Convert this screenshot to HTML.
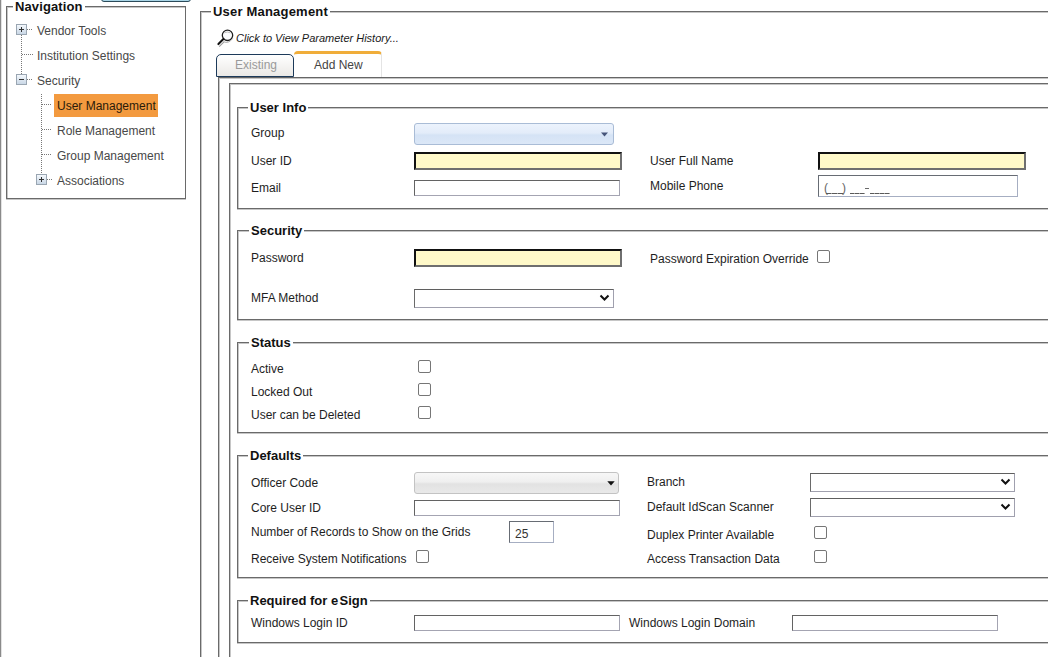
<!DOCTYPE html>
<html><head><meta charset="utf-8"><title>User Management</title>
<style>
*{box-sizing:border-box;}
html,body{margin:0;padding:0;}
body{width:1048px;height:657px;overflow:hidden;position:relative;background:#fff;font-family:"Liberation Sans",sans-serif;}
.a{position:absolute;}
.t{position:absolute;font-size:12px;line-height:14px;color:#1e1e1e;white-space:nowrap;}
.tr{position:absolute;font-size:12px;line-height:14px;color:#484848;white-space:nowrap;}
.lg{position:absolute;font-size:13px;font-weight:bold;line-height:15px;color:#111;background:#fff;padding:0 2px;white-space:nowrap;}
.fs{position:absolute;border:1px solid #6a6a6a;box-shadow:inset 1px 1px 0 #c6c6c6,0 1px 0 #c6c6c6;}
.cb{position:absolute;width:13px;height:13px;border:1px solid #767676;border-radius:2px;background:#fff;}
.yl{position:absolute;height:18px;width:208px;background:#fff9c9;border-style:solid;border-width:2px;border-color:#111 #6f6f6f #6f6f6f #111;}
.tb{position:absolute;height:16px;width:206px;background:#fff;border-style:solid;border-width:1px;border-color:#636363 #a4a4b2 #a4a4b2 #636363;}
.sel{position:absolute;height:19px;background:#fff;border-style:solid;border-width:1px;border-color:#5f5f5f #a0a0ae #a0a0ae #6a6a6a;}
.chev{position:absolute;width:11px;height:7px;}
.dv{position:absolute;width:1px;background-image:linear-gradient(#777 50%,transparent 50%);background-size:1px 2px;}
.dh{position:absolute;height:1px;background-image:linear-gradient(90deg,#777 50%,transparent 50%);background-size:2px 1px;}
.pm{position:absolute;width:11px;height:11px;border:1px solid #9aa6b2;background:linear-gradient(#f4f8fc,#c9d7e6);}
</style></head>
<body>
<!-- far-left frame line -->
<div class="a" style="left:0;top:0;width:1px;height:657px;background:#8a8a8a;box-shadow:1px 0 0 #e2e2e2"></div>
<!-- top button stub -->
<div class="a" style="left:101px;top:-6px;width:90px;height:8px;background:#a9d5e6;border:1px solid #2c4b5a;border-radius:0 0 3px 3px"></div>

<!-- NAVIGATION -->
<div class="fs" style="left:6px;top:6px;width:180px;height:193px"></div>
<div class="lg" style="left:13px;top:-1px;letter-spacing:0.12px;padding-right:2px">Navigation</div>

<!-- tree lines -->
<div class="dv" style="left:21px;top:35px;height:39px"></div>
<div class="dh" style="left:27px;top:29px;width:6px"></div>
<div class="dh" style="left:22px;top:54px;width:11px"></div>
<div class="dh" style="left:27px;top:79px;width:6px"></div>
<div class="dv" style="left:41px;top:94px;height:80px"></div>
<div class="dh" style="left:42px;top:104px;width:10px"></div>
<div class="dh" style="left:42px;top:129px;width:10px"></div>
<div class="dh" style="left:42px;top:154px;width:10px"></div>
<div class="dh" style="left:47px;top:179px;width:6px"></div>
<div class="pm" style="left:16px;top:24px"><div class="a" style="left:2px;top:4px;width:5px;height:1px;background:#333"></div><div class="a" style="left:4px;top:2px;width:1px;height:5px;background:#333"></div></div>
<div class="pm" style="left:16px;top:74px"><div class="a" style="left:2px;top:4px;width:5px;height:1px;background:#333"></div></div>
<div class="pm" style="left:36px;top:174px"><div class="a" style="left:2px;top:4px;width:5px;height:1px;background:#333"></div><div class="a" style="left:4px;top:2px;width:1px;height:5px;background:#333"></div></div>

<div class="tr" style="left:37px;top:24px">Vendor Tools</div>
<div class="tr" style="left:37px;top:49px">Institution Settings</div>
<div class="tr" style="left:37px;top:74px">Security</div>
<div class="a" style="left:54px;top:94px;width:104px;height:23px;background:#f39a3f"></div>
<div class="tr" style="left:57px;top:99px;color:#2a1a0a">User Management</div>
<div class="tr" style="left:57px;top:124px">Role Management</div>
<div class="tr" style="left:57px;top:149px">Group Management</div>
<div class="tr" style="left:57px;top:174px">Associations</div>

<!-- MAIN FIELDSET -->
<div class="fs" style="left:200px;top:11px;width:900px;height:700px"></div>
<div class="lg" style="left:211px;top:4px;letter-spacing:0.2px;padding-right:2px">User Management</div>

<!-- history link -->
<svg class="a" style="left:216px;top:29px" width="20" height="20" viewBox="0 0 20 20">
  <circle cx="11.5" cy="6.3" r="5.2" fill="#fbfcfd" stroke="#1e1e1e" stroke-width="1.3"/>
  <path d="M8.3 3.8 Q11.3 2.2 14.3 3.8" fill="none" stroke="#b8b8b8" stroke-width="0.9"/>
  <path d="M7.6 12.6 Q12.2 15.2 16.8 9.4" fill="none" stroke="#a8a8a8" stroke-width="1"/>
  <path d="M7.4 10.1 L2.4 15.1" stroke="#111" stroke-width="2.1" stroke-linecap="round"/>
  <path d="M8.0 12.9 L3.2 17.6" stroke="#9a9a9a" stroke-width="1.1"/>
</svg>
<div class="a" style="left:236px;top:32px;font-size:11px;line-height:13px;font-style:italic;color:#1a1a1a;white-space:nowrap">Click to View Parameter History...</div>

<!-- tabs -->
<div class="a" style="left:216px;top:54px;width:78px;height:23px;border:1px solid #1d3a5a;border-radius:5px 5px 0 0;background:linear-gradient(#ffffff,#ebe9e6)"></div>
<div class="a" style="left:235px;top:58px;font-size:12px;line-height:14px;color:#9a9a9a;white-space:nowrap">Existing</div>
<div class="a" style="left:294px;top:51px;width:88px;height:26px;border-top:3px solid #f0ad3a;border-right:1px solid #e4e4e4;border-radius:4px 4px 0 0;background:#fff"></div>
<div class="a" style="left:314px;top:58px;font-size:12px;line-height:14px;color:#444;white-space:nowrap">Add New</div>

<!-- tab panel -->
<div class="a" style="left:218px;top:77px;width:900px;height:700px;border-left:1px solid #6a6a6a;border-top:1px solid #666;box-shadow:inset 1px 1px 0 #c6c6c6"></div>
<div class="a" style="left:229px;top:83px;width:900px;height:700px;border-left:1px solid #6a6a6a;border-top:1px solid #6a6a6a;box-shadow:inset 1px 1px 0 #c6c6c6"></div>

<!-- USER INFO -->
<div class="fs" style="left:237px;top:107px;width:900px;height:102px"></div>
<div class="lg" style="left:248px;top:100px">User Info</div>
<div class="t" style="left:251px;top:126px">Group</div>
<div class="t" style="left:251px;top:154px">User ID</div>
<div class="t" style="left:251px;top:181px">Email</div>
<div class="a" style="left:414px;top:123px;width:200px;height:22px;border:1px solid #a9bcd6;border-radius:3px;background:linear-gradient(#ecf3fd 0%,#e3ecf9 45%,#d5e3f5 55%,#dbe7f7 100%)"></div>
<svg class="a" style="left:600px;top:132px" width="9" height="5" viewBox="0 0 9 5"><path d="M1 0.5 L8 0.5 L4.5 4.5 Z" fill="#46557a"/></svg>
<div class="yl" style="left:414px;top:152px"></div>
<div class="tb" style="left:414px;top:180px"></div>
<div class="t" style="left:650px;top:154px">User Full Name</div>
<div class="t" style="left:650px;top:179px">Mobile Phone</div>
<div class="yl" style="left:818px;top:152px"></div>
<div class="a" style="left:818px;top:175px;width:200px;height:22px;border:1px solid;border-color:#676c74 #a6aec2 #a6aec2 #676c74;background:#fff"></div>
<div class="a" style="left:824px;top:181px;font-size:12px;line-height:14px;color:#666;white-space:nowrap">(</div>
<div class="a" style="left:826px;top:193px;width:18px;height:1px;background:repeating-linear-gradient(90deg,#5a5a5a 0 5px,#a0a0a0 5px 6px)"></div>
<div class="a" style="left:842px;top:181px;font-size:12px;line-height:14px;color:#666;white-space:nowrap">)</div>
<div class="a" style="left:850px;top:193px;width:15px;height:1px;background:repeating-linear-gradient(90deg,#5a5a5a 0 4px,#a0a0a0 4px 5px)"></div>
<div class="a" style="left:865px;top:188px;width:4px;height:1px;background:#6a6a6a"></div>
<div class="a" style="left:870px;top:193px;width:20px;height:1px;background:repeating-linear-gradient(90deg,#5a5a5a 0 4px,#a0a0a0 4px 5px)"></div>

<!-- SECURITY -->
<div class="fs" style="left:237px;top:230px;width:900px;height:90px"></div>
<div class="lg" style="left:249px;top:223px">Security</div>
<div class="t" style="left:251px;top:251px">Password</div>
<div class="t" style="left:251px;top:291px">MFA Method</div>
<div class="yl" style="left:414px;top:249px"></div>
<div class="sel" style="left:414px;top:289px;width:200px"></div>
<svg class="a" style="left:599px;top:294px" width="11" height="8" viewBox="0 0 11 8"><path d="M1.5 1.5 L5.5 5.5 L9.5 1.5" fill="none" stroke="#111" stroke-width="2"/></svg>
<div class="t" style="left:650px;top:252px">Password Expiration Override</div>
<div class="cb" style="left:817px;top:250px"></div>

<!-- STATUS -->
<div class="fs" style="left:237px;top:342px;width:900px;height:91px"></div>
<div class="lg" style="left:249px;top:335px">Status</div>
<div class="t" style="left:251px;top:362px">Active</div>
<div class="t" style="left:251px;top:385px">Locked Out</div>
<div class="t" style="left:251px;top:408px">User can be Deleted</div>
<div class="cb" style="left:418px;top:360px"></div>
<div class="cb" style="left:418px;top:383px"></div>
<div class="cb" style="left:418px;top:406px"></div>

<!-- DEFAULTS -->
<div class="fs" style="left:237px;top:455px;width:900px;height:123px"></div>
<div class="lg" style="left:248px;top:448px">Defaults</div>
<div class="t" style="left:251px;top:476px">Officer Code</div>
<div class="t" style="left:251px;top:501px">Core User ID</div>
<div class="t" style="left:251px;top:525px">Number of Records to Show on the Grids</div>
<div class="t" style="left:251px;top:552px">Receive System Notifications</div>
<div class="a" style="left:414px;top:472px;width:205px;height:22px;border:1px solid #c3c3c3;border-radius:3px;background:linear-gradient(#f7f7f7 0%,#efefef 45%,#e2e2e2 55%,#e9e9e9 100%)"></div>
<svg class="a" style="left:607px;top:481px" width="8" height="5" viewBox="0 0 8 5"><path d="M0.3 0.3 L7.7 0.3 L4 4.6 Z" fill="#111"/></svg>
<div class="tb" style="left:414px;top:500px"></div>
<div class="a" style="left:509px;top:521px;width:45px;height:22px;border:1px solid;border-color:#676c74 #a6aec2 #a6aec2 #676c74;background:#fff"></div>
<div class="a" style="left:515px;top:527px;font-size:12px;line-height:14px;color:#333;white-space:nowrap">25</div>
<div class="cb" style="left:416px;top:550px"></div>
<div class="t" style="left:647px;top:475px">Branch</div>
<div class="t" style="left:647px;top:500px">Default IdScan Scanner</div>
<div class="t" style="left:647px;top:528px">Duplex Printer Available</div>
<div class="t" style="left:647px;top:552px">Access Transaction Data</div>
<div class="sel" style="left:810px;top:473px;width:205px"></div>
<svg class="a" style="left:1000px;top:478px" width="11" height="8" viewBox="0 0 11 8"><path d="M1.5 1.5 L5.5 5.5 L9.5 1.5" fill="none" stroke="#111" stroke-width="2"/></svg>
<div class="sel" style="left:810px;top:498px;width:205px"></div>
<svg class="a" style="left:1000px;top:503px" width="11" height="8" viewBox="0 0 11 8"><path d="M1.5 1.5 L5.5 5.5 L9.5 1.5" fill="none" stroke="#111" stroke-width="2"/></svg>
<div class="cb" style="left:814px;top:526px"></div>
<div class="cb" style="left:814px;top:550px"></div>

<!-- ESIGN -->
<div class="fs" style="left:237px;top:600px;width:900px;height:43px"></div>
<div class="lg" style="left:248px;top:593px">Required for e<span style="margin-left:1.4px">S</span>ign</div>
<div class="t" style="left:251px;top:616px">Windows Login ID</div>
<div class="tb" style="left:414px;top:615px"></div>
<div class="t" style="left:629px;top:616px">Windows Login Domain</div>
<div class="tb" style="left:792px;top:615px"></div>

</body></html>
